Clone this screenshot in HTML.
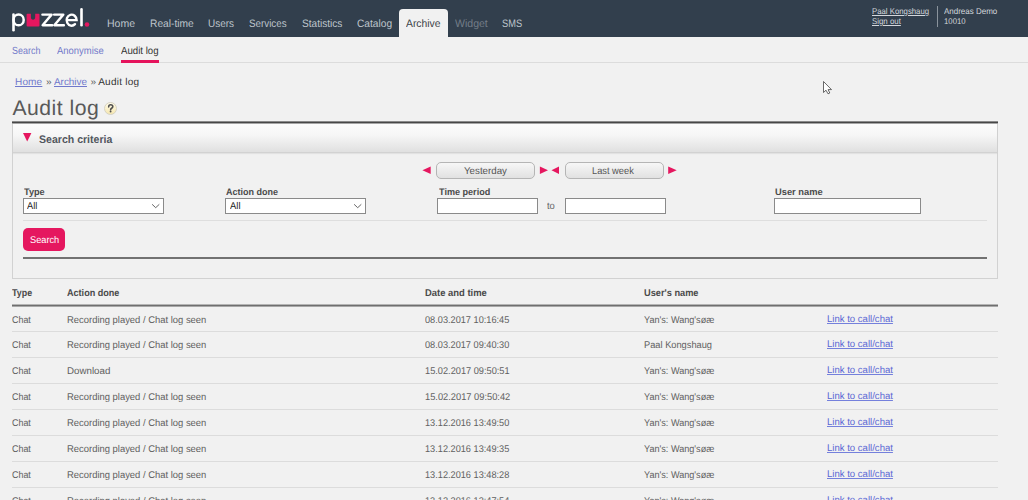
<!DOCTYPE html>
<html><head><meta charset="utf-8">
<style>
html,body{margin:0;padding:0}
body{width:1028px;height:500px;overflow:hidden;background:#f1f1f1;position:relative;font-family:"Liberation Sans",sans-serif}
.t{position:absolute;white-space:pre;font-family:"Liberation Sans",sans-serif;text-rendering:geometricPrecision}
.a{position:absolute}
.hdr{left:0;top:0;width:1028px;height:37px;background:#323f4d}
.tab{left:399px;top:9px;width:49px;height:28px;background:#f1f1f1;border-radius:4px 4px 0 0}
.subline{left:0;top:62px;width:1028px;height:1px;background:#dcdcdc}
.pinkline{left:121px;top:60px;width:38px;height:3px;background:#e5135c}
.help{left:104px;top:102px;width:11px;height:11px;border:1px solid #d6d2c2;border-radius:50%;background:linear-gradient(#fffbe8,#f6e7b0)}
.panel{left:12px;top:121px;width:984px;height:157px;border:1px solid #d2d2d2;border-top:none;background:#f1f1f1}
.ptop{left:12px;top:121px;width:986px;height:3px;background:linear-gradient(#8a8a8a 0,#8a8a8a 33.3%,#474747 33.3%,#474747 66.7%,#a5a5a5 66.7%)}
.phead{left:13px;top:124px;width:984px;height:28px;background:linear-gradient(#fcfcfc 0,#f6f6f6 40%,#e0e0e0 100%);border-bottom:1px solid #d2d2d2;box-shadow:0 1px 1px rgba(0,0,0,0.06)}
.btn{top:162px;height:15px;border:1px solid #b5b5b5;border-radius:5px;background:linear-gradient(#f7f7f7,#e1e1e1)}
.sel{top:198px;height:14px;border:1px solid #8a8a8a;background:#fff}
.sep{left:23px;top:220px;width:964px;height:1px;background:#dedede}
.sbtn{left:23px;top:228px;width:42px;height:23px;border-radius:5px;background:#e5175f}
.dline{left:23px;top:257px;width:964px;height:2px;background:#727272}
.thline{left:12px;top:304px;width:986px;height:3px;background:linear-gradient(#b5b5b5 0,#b5b5b5 33%,#6f6f6f 33%,#6f6f6f 67%,#a8a8a8 67%)}
.rline{left:12px;width:986px;height:1px;background:#dcdcdc}
</style></head><body>
<div class="a hdr"></div>
<svg class="a" style="left:0;top:0" width="100" height="37" viewBox="0 0 100 37">
  <!-- p -->
  <path d="M13.5 14.6 V30.2" stroke="#fff" stroke-width="2.6" stroke-linecap="round"/>
  <ellipse cx="18.6" cy="19.9" rx="5.1" ry="5.4" fill="none" stroke="#fff" stroke-width="2.5"/>
  <!-- pink piece -->
  <path d="M26.6 14.5 Q26.6 13.7 27.4 13.7 H30.9 V16.9 A2.15 2.75 0 0 0 35.2 16.9 V13.7 H38.7 Q39.5 13.7 39.5 14.5 V25.6 Q39.5 26.6 38.5 26.6 H27.6 Q26.6 26.6 26.6 25.6 Z" fill="#e5175f"/>
  <!-- z -->
  <path d="M42.4 14.6 H51.6 L42.6 25.2 H52.2" fill="none" stroke="#fff" stroke-width="2.4" stroke-linejoin="round" stroke-linecap="round"/>
  <path d="M54.1 14.6 H63.3 L54.3 25.2 H63.9" fill="none" stroke="#fff" stroke-width="2.4" stroke-linejoin="round" stroke-linecap="round"/>
  <!-- e -->
  <path d="M66.8 20.1 H76.6 A5.0 5.5 0 1 0 75.0 24.2" fill="none" stroke="#fff" stroke-width="2.4" stroke-linecap="round"/>
  <!-- l -->
  <path d="M81.5 9.4 V25.2" stroke="#fff" stroke-width="2.6" stroke-linecap="round"/>
  <circle cx="87" cy="24.5" r="2.3" fill="#e5175f"/>
</svg>
<div class="a tab"></div>
<div class="a" style="left:937px;top:6px;width:1px;height:21px;background:#8a939c"></div>
<div class="a subline"></div>
<div class="a pinkline"></div>
<div class="a help"></div>
<svg class="a" style="left:100px;top:98px" width="22" height="20" viewBox="100 98 22 20">
  <path d="M108.7 106.9 Q108.6 104.7 110.7 104.7 Q112.8 104.7 112.8 106.6 Q112.8 107.7 111.6 108.3 Q110.6 108.8 110.6 110.0" fill="none" stroke="#4f4f4f" stroke-width="1.6" stroke-linecap="round"/>
  <circle cx="110.6" cy="111.6" r="0.95" fill="#4f4f4f"/>
</svg>
<div class="a panel"></div>
<div class="a phead"></div>
<div class="a ptop"></div>
<svg class="a" style="left:0;top:0" width="700" height="200">
  <polygon points="23,133 31.4,133 27.2,141.4" fill="#e5175f"/>
  <polygon points="430.7,166.4 430.7,174 422.4,170.2" fill="#e5175f"/>
  <polygon points="539.9,166.4 539.9,174 548,170.2" fill="#e5175f"/>
  <polygon points="559,166.4 559,174 551.5,170.2" fill="#e5175f"/>
  <polygon points="668.2,166.4 668.2,174 676.7,170.2" fill="#e5175f"/>
</svg>
<div class="a btn" style="left:436px;width:97px"></div>
<div class="a btn" style="left:565px;width:97px"></div>
<div class="a sel" style="left:23px;width:139px"></div>
<div class="a sel" style="left:225px;width:139px"></div>
<div class="a sel" style="left:437px;width:99px"></div>
<div class="a sel" style="left:565px;width:99px"></div>
<div class="a sel" style="left:774px;width:145px"></div>
<svg class="a" style="left:0;top:0" width="400" height="230">
  <polyline points="152.1,204.3 155.7,207.7 159.3,204.3" fill="none" stroke="#555" stroke-width="0.9"/>
  <polyline points="354.1,204.3 357.7,207.7 361.3,204.3" fill="none" stroke="#555" stroke-width="0.9"/>
</svg>
<div class="a sep"></div>
<div class="a sbtn"></div>
<div class="a dline"></div>
<div class="a thline"></div>
<div class="a rline" style="top:331px"></div>
<div class="a rline" style="top:357px"></div>
<div class="a rline" style="top:383px"></div>
<div class="a rline" style="top:409px"></div>
<div class="a rline" style="top:435px"></div>
<div class="a rline" style="top:461px"></div>
<div class="a rline" style="top:487px"></div>
<div class="t" style="left:107.00px;top:19px;font-size:10.8px;line-height:10.8px;font-weight:400;color:#bec5cc;letter-spacing:0.000px;transform:scaleX(0.9724);transform-origin:0 0;">Home</div>
<div class="t" style="left:149.60px;top:19px;font-size:10.8px;line-height:10.8px;font-weight:400;color:#bec5cc;letter-spacing:0.000px;transform:scaleX(0.9482);transform-origin:0 0;">Real-time</div>
<div class="t" style="left:208.00px;top:19px;font-size:10.8px;line-height:10.8px;font-weight:400;color:#bec5cc;letter-spacing:0.000px;transform:scaleX(0.9203);transform-origin:0 0;">Users</div>
<div class="t" style="left:248.90px;top:19px;font-size:10.8px;line-height:10.8px;font-weight:400;color:#bec5cc;letter-spacing:0.000px;transform:scaleX(0.9071);transform-origin:0 0;">Services</div>
<div class="t" style="left:301.50px;top:19px;font-size:10.8px;line-height:10.8px;font-weight:400;color:#bec5cc;letter-spacing:0.000px;transform:scaleX(0.9338);transform-origin:0 0;">Statistics</div>
<div class="t" style="left:356.70px;top:19px;font-size:10.8px;line-height:10.8px;font-weight:400;color:#bec5cc;letter-spacing:0.000px;transform:scaleX(0.9433);transform-origin:0 0;">Catalog</div>
<div class="t" style="left:406.00px;top:19px;font-size:10.8px;line-height:10.8px;font-weight:400;color:#3a3f46;letter-spacing:0.000px;transform:scaleX(0.9584);transform-origin:0 0;">Archive</div>
<div class="t" style="left:455.10px;top:19px;font-size:10.8px;line-height:10.8px;font-weight:400;color:#737d88;letter-spacing:0.000px;transform:scaleX(0.9761);transform-origin:0 0;">Widget</div>
<div class="t" style="left:502.00px;top:19px;font-size:10.8px;line-height:10.8px;font-weight:400;color:#bec5cc;letter-spacing:0.000px;transform:scaleX(0.8579);transform-origin:0 0;">SMS</div>
<div class="t" style="left:872.40px;top:7px;font-size:8.4px;line-height:8.4px;font-weight:400;color:#d3d7dc;letter-spacing:0.000px;transform:scaleX(0.9287);transform-origin:0 0;text-decoration:underline;">Paal Kongshaug</div>
<div class="t" style="left:872.40px;top:17px;font-size:8.4px;line-height:8.4px;font-weight:400;color:#d3d7dc;letter-spacing:0.000px;transform:scaleX(0.9394);transform-origin:0 0;text-decoration:underline;">Sign out</div>
<div class="t" style="left:944.30px;top:7px;font-size:8.4px;line-height:8.4px;font-weight:400;color:#d3d7dc;letter-spacing:0.000px;transform:scaleX(0.9537);transform-origin:0 0;">Andreas Demo</div>
<div class="t" style="left:944.30px;top:17px;font-size:8.4px;line-height:8.4px;font-weight:400;color:#d3d7dc;letter-spacing:0.000px;transform:scaleX(0.9267);transform-origin:0 0;">10010</div>
<div class="t" style="left:12.00px;top:47px;font-size:10.3px;line-height:10.3px;font-weight:400;color:#7179c9;letter-spacing:0.000px;transform:scaleX(0.8693);transform-origin:0 0;">Search</div>
<div class="t" style="left:57.40px;top:47px;font-size:10.3px;line-height:10.3px;font-weight:400;color:#7179c9;letter-spacing:0.000px;transform:scaleX(0.9178);transform-origin:0 0;">Anonymise</div>
<div class="t" style="left:120.80px;top:47px;font-size:10.3px;line-height:10.3px;font-weight:400;color:#333;letter-spacing:0.000px;transform:scaleX(0.9369);transform-origin:0 0;">Audit log</div>
<div class="t" style="left:15.00px;top:78px;font-size:10.0px;line-height:10.0px;font-weight:400;color:#6f78cc;letter-spacing:0.162px;text-decoration:underline;">Home</div>
<div class="t" style="left:46.00px;top:78px;font-size:10.0px;line-height:10.0px;font-weight:400;color:#555;letter-spacing:0.000px;">»</div>
<div class="t" style="left:53.70px;top:78px;font-size:10.0px;line-height:10.0px;font-weight:400;color:#6f78cc;letter-spacing:0.000px;transform:scaleX(0.9887);transform-origin:0 0;text-decoration:underline;">Archive</div>
<div class="t" style="left:90.50px;top:78px;font-size:10.0px;line-height:10.0px;font-weight:400;color:#555;letter-spacing:0.000px;">»</div>
<div class="t" style="left:98.20px;top:78px;font-size:10.0px;line-height:10.0px;font-weight:400;color:#333;letter-spacing:0.256px;">Audit log</div>
<div class="t" style="left:12.40px;top:98px;font-size:21.2px;line-height:21.2px;font-weight:400;color:#595959;letter-spacing:0.491px;">Audit log</div>
<div class="t" style="left:38.60px;top:135px;font-size:11.0px;line-height:11.0px;font-weight:700;color:#52575e;letter-spacing:0.000px;transform:scaleX(0.9597);transform-origin:0 0;">Search criteria</div>
<div class="t" style="left:464.00px;top:167px;font-size:10.0px;line-height:10.0px;font-weight:400;color:#555;letter-spacing:0.000px;transform:scaleX(0.9749);transform-origin:0 0;">Yesterday</div>
<div class="t" style="left:592.30px;top:167px;font-size:10.0px;line-height:10.0px;font-weight:400;color:#555;letter-spacing:0.000px;transform:scaleX(0.9278);transform-origin:0 0;">Last week</div>
<div class="t" style="left:24.00px;top:187px;font-size:9.4px;line-height:9.4px;font-weight:700;color:#4a4a4a;letter-spacing:0.000px;transform:scaleX(0.9776);transform-origin:0 0;">Type</div>
<div class="t" style="left:226.20px;top:187px;font-size:9.4px;line-height:9.4px;font-weight:700;color:#4a4a4a;letter-spacing:0.000px;transform:scaleX(0.9602);transform-origin:0 0;">Action done</div>
<div class="t" style="left:438.50px;top:187px;font-size:9.4px;line-height:9.4px;font-weight:700;color:#4a4a4a;letter-spacing:0.000px;transform:scaleX(0.9674);transform-origin:0 0;">Time period</div>
<div class="t" style="left:775.00px;top:187px;font-size:9.4px;line-height:9.4px;font-weight:700;color:#4a4a4a;letter-spacing:0.000px;transform:scaleX(0.9952);transform-origin:0 0;">User name</div>
<div class="t" style="left:27.40px;top:202px;font-size:9.8px;line-height:9.8px;font-weight:400;color:#222;letter-spacing:0.000px;transform:scaleX(0.9430);transform-origin:0 0;">All</div>
<div class="t" style="left:229.50px;top:202px;font-size:9.8px;line-height:9.8px;font-weight:400;color:#222;letter-spacing:0.000px;transform:scaleX(0.9616);transform-origin:0 0;">All</div>
<div class="t" style="left:547.20px;top:202px;font-size:9.8px;line-height:9.8px;font-weight:400;color:#666;letter-spacing:0.000px;transform:scaleX(0.9631);transform-origin:0 0;">to</div>
<div class="t" style="left:29.70px;top:236px;font-size:9.8px;line-height:9.8px;font-weight:400;color:#fff;letter-spacing:0.000px;transform:scaleX(0.9414);transform-origin:0 0;">Search</div>
<div class="t" style="left:12.40px;top:289px;font-size:9.8px;line-height:9.8px;font-weight:700;color:#4a4a4a;letter-spacing:0.000px;transform:scaleX(0.9079);transform-origin:0 0;">Type</div>
<div class="t" style="left:66.60px;top:289px;font-size:9.8px;line-height:9.8px;font-weight:700;color:#4a4a4a;letter-spacing:0.000px;transform:scaleX(0.9256);transform-origin:0 0;">Action done</div>
<div class="t" style="left:424.60px;top:289px;font-size:9.8px;line-height:9.8px;font-weight:700;color:#4a4a4a;letter-spacing:0.000px;transform:scaleX(0.9631);transform-origin:0 0;">Date and time</div>
<div class="t" style="left:644.00px;top:289px;font-size:9.8px;line-height:9.8px;font-weight:700;color:#4a4a4a;letter-spacing:0.000px;transform:scaleX(0.9413);transform-origin:0 0;">User's name</div>
<div class="t" style="left:12.40px;top:316px;font-size:9.8px;line-height:9.8px;font-weight:400;color:#606060;letter-spacing:0.000px;transform:scaleX(0.9107);transform-origin:0 0;">Chat</div>
<div class="t" style="left:66.60px;top:316px;font-size:9.8px;line-height:9.8px;font-weight:400;color:#606060;letter-spacing:0.000px;transform:scaleX(0.9618);transform-origin:0 0;">Recording played / Chat log seen</div>
<div class="t" style="left:424.60px;top:316px;font-size:9.8px;line-height:9.8px;font-weight:400;color:#606060;letter-spacing:0.000px;transform:scaleX(0.9376);transform-origin:0 0;">08.03.2017 10:16:45</div>
<div class="t" style="left:644.00px;top:316px;font-size:9.8px;line-height:9.8px;font-weight:400;color:#606060;letter-spacing:0.000px;transform:scaleX(0.9302);transform-origin:0 0;">Yan's: Wang'søæ</div>
<div class="t" style="left:826.50px;top:315px;font-size:9.8px;line-height:9.8px;font-weight:400;color:#5b67d4;letter-spacing:0.000px;transform:scaleX(0.9763);transform-origin:0 0;text-decoration:underline;text-decoration-color:#7480dc;">Link to call/chat</div>
<div class="t" style="left:12.40px;top:341px;font-size:9.8px;line-height:9.8px;font-weight:400;color:#606060;letter-spacing:0.000px;transform:scaleX(0.9107);transform-origin:0 0;">Chat</div>
<div class="t" style="left:66.60px;top:341px;font-size:9.8px;line-height:9.8px;font-weight:400;color:#606060;letter-spacing:0.000px;transform:scaleX(0.9618);transform-origin:0 0;">Recording played / Chat log seen</div>
<div class="t" style="left:424.60px;top:341px;font-size:9.8px;line-height:9.8px;font-weight:400;color:#606060;letter-spacing:0.000px;transform:scaleX(0.9376);transform-origin:0 0;">08.03.2017 09:40:30</div>
<div class="t" style="left:644.00px;top:341px;font-size:9.8px;line-height:9.8px;font-weight:400;color:#606060;letter-spacing:0.000px;transform:scaleX(0.9461);transform-origin:0 0;">Paal Kongshaug</div>
<div class="t" style="left:826.50px;top:340px;font-size:9.8px;line-height:9.8px;font-weight:400;color:#5b67d4;letter-spacing:0.000px;transform:scaleX(0.9763);transform-origin:0 0;text-decoration:underline;text-decoration-color:#7480dc;">Link to call/chat</div>
<div class="t" style="left:12.40px;top:367px;font-size:9.8px;line-height:9.8px;font-weight:400;color:#606060;letter-spacing:0.000px;transform:scaleX(0.9107);transform-origin:0 0;">Chat</div>
<div class="t" style="left:66.60px;top:367px;font-size:9.8px;line-height:9.8px;font-weight:400;color:#606060;letter-spacing:0.000px;transform:scaleX(0.9949);transform-origin:0 0;">Download</div>
<div class="t" style="left:424.60px;top:367px;font-size:9.8px;line-height:9.8px;font-weight:400;color:#606060;letter-spacing:0.000px;transform:scaleX(0.9414);transform-origin:0 0;">15.02.2017 09:50:51</div>
<div class="t" style="left:644.00px;top:367px;font-size:9.8px;line-height:9.8px;font-weight:400;color:#606060;letter-spacing:0.000px;transform:scaleX(0.9302);transform-origin:0 0;">Yan's: Wang'søæ</div>
<div class="t" style="left:826.50px;top:366px;font-size:9.8px;line-height:9.8px;font-weight:400;color:#5b67d4;letter-spacing:0.000px;transform:scaleX(0.9763);transform-origin:0 0;text-decoration:underline;text-decoration-color:#7480dc;">Link to call/chat</div>
<div class="t" style="left:12.40px;top:393px;font-size:9.8px;line-height:9.8px;font-weight:400;color:#606060;letter-spacing:0.000px;transform:scaleX(0.9107);transform-origin:0 0;">Chat</div>
<div class="t" style="left:66.60px;top:393px;font-size:9.8px;line-height:9.8px;font-weight:400;color:#606060;letter-spacing:0.000px;transform:scaleX(0.9618);transform-origin:0 0;">Recording played / Chat log seen</div>
<div class="t" style="left:424.60px;top:393px;font-size:9.8px;line-height:9.8px;font-weight:400;color:#606060;letter-spacing:0.000px;transform:scaleX(0.9481);transform-origin:0 0;">15.02.2017 09:50:42</div>
<div class="t" style="left:644.00px;top:393px;font-size:9.8px;line-height:9.8px;font-weight:400;color:#606060;letter-spacing:0.000px;transform:scaleX(0.9302);transform-origin:0 0;">Yan's: Wang'søæ</div>
<div class="t" style="left:826.50px;top:392px;font-size:9.8px;line-height:9.8px;font-weight:400;color:#5b67d4;letter-spacing:0.000px;transform:scaleX(0.9763);transform-origin:0 0;text-decoration:underline;text-decoration-color:#7480dc;">Link to call/chat</div>
<div class="t" style="left:12.40px;top:419px;font-size:9.8px;line-height:9.8px;font-weight:400;color:#606060;letter-spacing:0.000px;transform:scaleX(0.9107);transform-origin:0 0;">Chat</div>
<div class="t" style="left:66.60px;top:419px;font-size:9.8px;line-height:9.8px;font-weight:400;color:#606060;letter-spacing:0.000px;transform:scaleX(0.9618);transform-origin:0 0;">Recording played / Chat log seen</div>
<div class="t" style="left:424.60px;top:419px;font-size:9.8px;line-height:9.8px;font-weight:400;color:#606060;letter-spacing:0.000px;transform:scaleX(0.9376);transform-origin:0 0;">13.12.2016 13:49:50</div>
<div class="t" style="left:644.00px;top:419px;font-size:9.8px;line-height:9.8px;font-weight:400;color:#606060;letter-spacing:0.000px;transform:scaleX(0.9302);transform-origin:0 0;">Yan's: Wang'søæ</div>
<div class="t" style="left:826.50px;top:418px;font-size:9.8px;line-height:9.8px;font-weight:400;color:#5b67d4;letter-spacing:0.000px;transform:scaleX(0.9763);transform-origin:0 0;text-decoration:underline;text-decoration-color:#7480dc;">Link to call/chat</div>
<div class="t" style="left:12.40px;top:445px;font-size:9.8px;line-height:9.8px;font-weight:400;color:#606060;letter-spacing:0.000px;transform:scaleX(0.9107);transform-origin:0 0;">Chat</div>
<div class="t" style="left:66.60px;top:445px;font-size:9.8px;line-height:9.8px;font-weight:400;color:#606060;letter-spacing:0.000px;transform:scaleX(0.9618);transform-origin:0 0;">Recording played / Chat log seen</div>
<div class="t" style="left:424.60px;top:445px;font-size:9.8px;line-height:9.8px;font-weight:400;color:#606060;letter-spacing:0.000px;transform:scaleX(0.9376);transform-origin:0 0;">13.12.2016 13:49:35</div>
<div class="t" style="left:644.00px;top:445px;font-size:9.8px;line-height:9.8px;font-weight:400;color:#606060;letter-spacing:0.000px;transform:scaleX(0.9302);transform-origin:0 0;">Yan's: Wang'søæ</div>
<div class="t" style="left:826.50px;top:444px;font-size:9.8px;line-height:9.8px;font-weight:400;color:#5b67d4;letter-spacing:0.000px;transform:scaleX(0.9763);transform-origin:0 0;text-decoration:underline;text-decoration-color:#7480dc;">Link to call/chat</div>
<div class="t" style="left:12.40px;top:471px;font-size:9.8px;line-height:9.8px;font-weight:400;color:#606060;letter-spacing:0.000px;transform:scaleX(0.9107);transform-origin:0 0;">Chat</div>
<div class="t" style="left:66.60px;top:471px;font-size:9.8px;line-height:9.8px;font-weight:400;color:#606060;letter-spacing:0.000px;transform:scaleX(0.9618);transform-origin:0 0;">Recording played / Chat log seen</div>
<div class="t" style="left:424.60px;top:471px;font-size:9.8px;line-height:9.8px;font-weight:400;color:#606060;letter-spacing:0.000px;transform:scaleX(0.9376);transform-origin:0 0;">13.12.2016 13:48:28</div>
<div class="t" style="left:644.00px;top:471px;font-size:9.8px;line-height:9.8px;font-weight:400;color:#606060;letter-spacing:0.000px;transform:scaleX(0.9302);transform-origin:0 0;">Yan's: Wang'søæ</div>
<div class="t" style="left:826.50px;top:470px;font-size:9.8px;line-height:9.8px;font-weight:400;color:#5b67d4;letter-spacing:0.000px;transform:scaleX(0.9763);transform-origin:0 0;text-decoration:underline;text-decoration-color:#7480dc;">Link to call/chat</div>
<div class="t" style="left:12.40px;top:497px;font-size:9.8px;line-height:9.8px;font-weight:400;color:#606060;letter-spacing:0.000px;transform:scaleX(0.9107);transform-origin:0 0;">Chat</div>
<div class="t" style="left:66.60px;top:497px;font-size:9.8px;line-height:9.8px;font-weight:400;color:#606060;letter-spacing:0.000px;transform:scaleX(0.9618);transform-origin:0 0;">Recording played / Chat log seen</div>
<div class="t" style="left:424.60px;top:497px;font-size:9.8px;line-height:9.8px;font-weight:400;color:#606060;letter-spacing:0.000px;transform:scaleX(0.9376);transform-origin:0 0;">13.12.2016 13:47:54</div>
<div class="t" style="left:644.00px;top:497px;font-size:9.8px;line-height:9.8px;font-weight:400;color:#606060;letter-spacing:0.000px;transform:scaleX(0.9302);transform-origin:0 0;">Yan's: Wang'søæ</div>
<div class="t" style="left:826.50px;top:496px;font-size:9.8px;line-height:9.8px;font-weight:400;color:#5b67d4;letter-spacing:0.000px;transform:scaleX(0.9763);transform-origin:0 0;text-decoration:underline;text-decoration-color:#7480dc;">Link to call/chat</div>
<svg class="a" style="left:815px;top:75px" width="25" height="25" viewBox="815 75 25 25">
  <path d="M823.5 81.5 V92.5 L826 90.2 L828 93.8 L829.8 93 L828.1 89.6 L831.5 89.6 Z" fill="#fff" stroke="#3a3a3a" stroke-width="0.75" stroke-linejoin="round"/>
</svg>
</body></html>
